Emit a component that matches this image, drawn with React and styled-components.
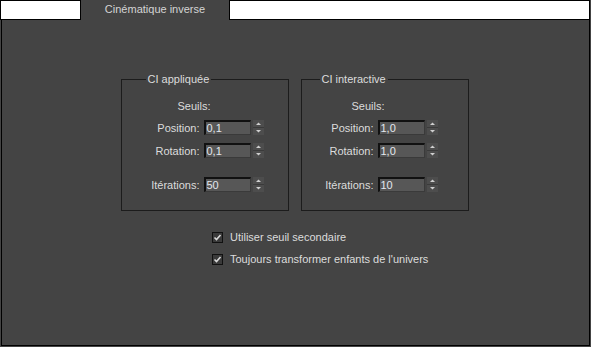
import React from 'react';
import styled, { createGlobalStyle } from 'styled-components';

const GlobalStyle = createGlobalStyle`
  html, body {
    margin: 0;
    padding: 0;
    background: #444444;
  }
  body {
    font-family: "Liberation Sans", Arial, sans-serif;
    font-size: 11px;
    color: #dcdcdc;
  }
`;

const Window = styled.div`
  width: 591px;
  height: 347px;
  background: #444444;
  display: flex;
  flex-direction: column;
`;

const TabBar = styled.div`
  display: flex;
  height: 20px;
  flex: none;
`;

const Tab = styled.div`
  box-sizing: border-box;
  height: 20px;
  width: ${p => (p.$grow ? 'auto' : `${p.$width}px`)};
  flex: ${p => (p.$grow ? '1' : 'none')};
  margin-right: ${p => (p.$grow ? '1px' : '0')};
  background: ${p => (p.$active ? '#444444' : '#ffffff')};
  border: ${p => (p.$active ? 'none' : '1px solid #000')};
  border-top-width: ${p => (p.$active ? '0' : '1px')};
  color: #d4d4d4;
  text-align: center;
  line-height: 18px;
`;

const Panel = styled.div`
  flex: 1;
  margin: 0 1px 1px 1px;
  border: 1px solid #000;
  border-top: none;
  display: flex;
  flex-direction: column;
`;

const Groups = styled.div`
  display: flex;
  justify-content: center;
  gap: 12px;
  margin-top: 53px;
  padding-right: 2px;
`;

const GroupBox = styled.fieldset`
  box-sizing: border-box;
  width: 168px;
  margin: 0;
  padding: 13px 0 18px ${p => p.$pad}px;
  border: 1px solid #1c1c1c;
  min-width: 0;
`;

const Legend = styled.legend`
  padding: 0 2px;
  margin-left: 6px;
  line-height: 13px;
  color: #dcdcdc;
`;

const Heading = styled.div`
  margin-left: 38px;
  line-height: 15px;
  margin-bottom: 6px;
`;

const Row = styled.div`
  display: flex;
  align-items: center;
  height: 15px;
  margin-top: ${p => p.$gap}px;
`;

const Label = styled.span`
  width: 60px;
  text-align: right;
  margin-right: 4px;
  white-space: nowrap;
`;

const Input = styled.div`
  box-sizing: border-box;
  width: 47px;
  height: 15px;
  background: #575757;
  border-top: 2px solid #111;
  border-left: 2px solid #111;
  border-right: 1px solid #3a3a3a;
  border-bottom: 1px solid #3a3a3a;
  color: #e4e8ee;
  line-height: 12px;
  padding-left: 1px;
`;

const SpinBox = styled.svg`
  margin-left: 2px;
  display: block;
`;

const Checks = styled.div`
  display: flex;
  flex-direction: column;
  gap: 8px;
  margin-top: 19px;
  padding-left: 210px;
`;

const CheckRow = styled.label`
  display: flex;
  align-items: center;
  height: 14px;
  gap: 7px;
`;

const Spinner = () => (
  <SpinBox width="11" height="15" viewBox="0 0 11 15">
    <rect x="0" y="0" width="11" height="15" fill="#4d4d4d" />
    <rect x="0" y="7" width="11" height="1" fill="#3a3a3a" />
    <path d="M3 5 L5.5 2.5 L8 5 Z" fill="#cfcfcf" />
    <path d="M3 10 L5.5 12.5 L8 10 Z" fill="#cfcfcf" />
  </SpinBox>
);

const CheckBox = () => (
  <svg width="11" height="11" viewBox="0 0 11 11">
    <rect x="0" y="0" width="11" height="11" fill="#111" />
    <rect x="1" y="1" width="9" height="9" fill="#3a3a3a" />
    <path d="M2.5 5.5 L4.5 7.5 L8.5 3" stroke="#d8d8d8" strokeWidth="1.6" fill="none" />
  </svg>
);

const Field = ({ label, value, gap }) => (
  <Row $gap={gap}>
    <Label>{label}</Label>
    <Input>{value}</Input>
    <Spinner />
  </Row>
);

const Group = ({ title, pad, pos, rot, iter }) => (
  <GroupBox $pad={pad}>
    <Legend>{title}</Legend>
    <Heading>Seuils:</Heading>
    <Field label="Position:" value={pos} gap={0} />
    <Field label="Rotation:" value={rot} gap={8} />
    <Field label="Itérations:" value={iter} gap={19} />
  </GroupBox>
);

export default function App() {
  return (
    <Window>
      <GlobalStyle />
      <TabBar>
        <Tab $width={81} />
        <Tab $width={148} $active>Cinématique inverse</Tab>
        <Tab $grow />
      </TabBar>
      <Panel>
        <Groups>
          <Group title="CI appliquée" pad={18} pos="0,1" rot="0,1" iter="50" />
          <Group title="CI interactive" pad={12} pos="1,0" rot="1,0" iter="10" />
        </Groups>
        <Checks>
          <CheckRow><CheckBox />Utiliser seuil secondaire</CheckRow>
          <CheckRow><CheckBox />Toujours transformer enfants de l'univers</CheckRow>
        </Checks>
      </Panel>
    </Window>
  );
}
